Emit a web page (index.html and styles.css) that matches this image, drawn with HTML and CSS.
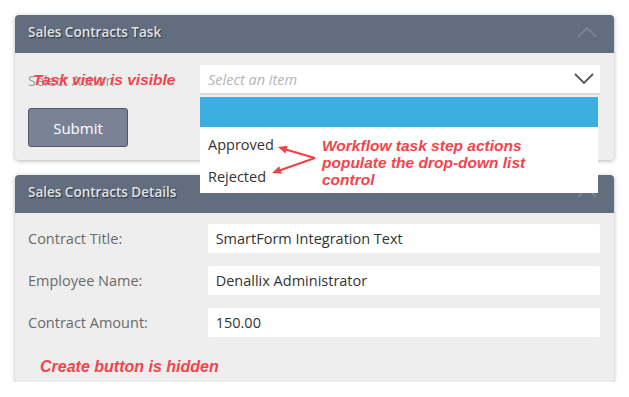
FILE: index.html
```html
<!DOCTYPE html>
<html lang="en">
<head>
  <meta charset="UTF-8" />
  <title>Sales Contracts</title>
  <link rel="stylesheet" href="styles.css">
</head>
<body>

  <div class="page">
    <!-- Task panel -->
    <div class="panel task-panel">
      <div class="panel-header">
        <span class="panel-title">Sales Contracts Task</span>
        <svg class="collapse" width="20" height="12" viewBox="0 0 20 12"><path d="M1 11 L10 2 L19 11" fill="none" stroke="#7e889b" stroke-width="1.6"/></svg>
      </div>
      <div class="panel-body task-body">
        <div class="task-row">
          <span class="field-label faded">Select Action</span>
          <div class="select-box">
            <span class="placeholder">Select an item</span>
            <svg width="20" height="12" viewBox="0 0 20 12"><path d="M1 1 L10 10 L19 1" fill="none" stroke="#555" stroke-width="1.8"/></svg>
          </div>
        </div>
        <button class="submit-btn">Submit</button>

        <span class="note note-task">Task view is visible</span>

        <!-- Open drop-down list -->
        <ul class="dropdown">
          <li class="selected"></li>
          <li>Approved</li>
          <li>Rejected</li>
        </ul>

        <svg class="arrows" width="60" height="55" viewBox="0 0 60 55">
          <path d="M53 33 L22 24 M53 33 L16 46" stroke="#ef4146" stroke-width="2.2" fill="none"/>
          <path d="M16 22 L25.7 20.8 L23.5 28.4 Z" fill="#ef4146"/>
          <path d="M10 48 L19.8 48.8 L17.2 41.2 Z" fill="#ef4146"/>
        </svg>
        <p class="note note-list">Workflow task step actions<br>populate the drop-down list<br>control</p>
      </div>
    </div>

    <!-- Details panel -->
    <div class="panel">
      <div class="panel-header">
        <span class="panel-title">Sales Contracts Details</span>
        <svg class="collapse" width="20" height="12" viewBox="0 0 20 12"><path d="M1 11 L10 2 L19 11" fill="none" stroke="#7e889b" stroke-width="1.6"/></svg>
      </div>
      <div class="panel-body details-body">
        <div class="form-row">
          <label class="field-label">Contract Title:</label>
          <div class="text-box">SmartForm Integration Text</div>
        </div>
        <div class="form-row">
          <label class="field-label">Employee Name:</label>
          <div class="text-box">Denallix Administrator</div>
        </div>
        <div class="form-row">
          <label class="field-label">Contract Amount:</label>
          <div class="text-box">150.00</div>
        </div>
        <p class="note note-create">Create button is hidden</p>
      </div>
    </div>
  </div>

</body>
</html>
```

FILE: styles.css
```css
* {
  margin: 0;
  padding: 0;
  box-sizing: border-box;
}

body {
  background: #fff;
  font-family: "Open Sans", "Noto Sans", sans-serif;
}

.page {
  padding: 15px 15px 0 15px;
  display: flex;
  flex-direction: column;
  gap: 15px;
}

/* Panels */
.panel {
  background: #eeeeee;
  border-radius: 4px;
  box-shadow: 0 1px 4px rgba(0, 0, 0, 0.3);
}
.task-panel {
  position: relative;
  z-index: 2;
}
.panel-header {
  height: 38px;
  background: #636d80;
  border-radius: 4px 4px 0 0;
  display: flex;
  align-items: center;
  justify-content: space-between;
  padding: 0 17px 5px 13px;
}
.panel-title {
  color: #dfe2e7;
  font-size: 13.5px;
  font-weight: 600;
  text-shadow: 1px 1px 1px rgba(30, 35, 45, 0.8);
}

.panel-body {
  position: relative;
  padding: 12px 14px 13px 13px;
}

/* Task body */
.task-row {
  display: flex;
  align-items: center;
  height: 30px;
}
.task-row .field-label {
  width: 172px;
}
.field-label {
  font-size: 14.5px;
  color: #6a6a6a;
}
.faded {
  color: #9a9a9a;
}
.select-box {
  flex: 1;
  height: 30px;
  background: #fff;
  border-bottom: 2px solid #dcdcdc;
  display: flex;
  align-items: center;
  justify-content: space-between;
  padding: 0 6px 0 8px;
}
.placeholder {
  font-style: italic;
  font-size: 14.5px;
  color: #b5b5b5;
}
.submit-btn {
  margin-top: 13px;
  width: 100px;
  height: 39px;
  background: #7a8396;
  border: 1px solid #4e5668;
  border-radius: 3px;
  color: #fff;
  font-family: inherit;
  font-size: 15px;
}

.dropdown {
  position: absolute;
  left: 185px;
  top: 44px;
  width: 398px;
  background: #fff;
  list-style: none;
  font-size: 14.5px;
  color: #333;
}
.dropdown li {
  height: 32px;
  line-height: 32px;
  padding-left: 8px;
}
.dropdown li:nth-child(2) {
  margin-top: 2px;
}
.dropdown li.selected {
  height: 30px;
  background: #3caee0;
}

/* Annotations */
.note {
  position: absolute;
  font-family: "Liberation Sans", Arial, sans-serif;
  font-weight: bold;
  font-style: italic;
  color: #f2444d;
}
.note-task {
  left: 18px;
  top: 18px;
  font-size: 15.5px;
}
.note-list {
  left: 307px;
  top: 84px;
  font-size: 15.5px;
  line-height: 17px;
}
.note-create {
  position: static;
  margin: 8px 0 0 12px;
  font-size: 16px;
}
.arrows {
  position: absolute;
  left: 247px;
  top: 72px;
  overflow: visible;
}

/* Details body */
.details-body {
  padding-top: 11px;
  padding-bottom: 6px;
  display: flex;
  flex-direction: column;
  gap: 13px;
}
.form-row {
  display: flex;
  align-items: center;
}
.form-row .field-label {
  width: 180px;
}
.text-box {
  width: 393px;
  height: 29px;
  background: #fff;
  border-radius: 2px;
  padding: 0 8px;
  line-height: 29px;
  font-size: 14.5px;
  color: #333;
}
```
